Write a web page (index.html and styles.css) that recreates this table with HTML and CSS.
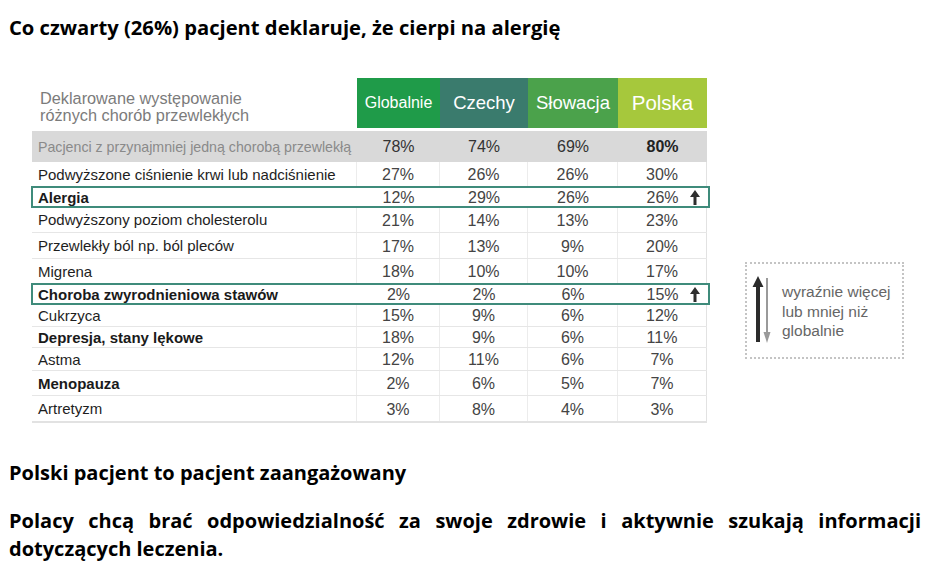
FILE: index.html
```html
<!DOCTYPE html>
<html lang="pl">
<head>
<meta charset="utf-8">
<title>Co czwarty pacjent</title>
<link rel="stylesheet" href="styles.css">
</head>
<body>
<div class="page">
  <h1 class="title">Co czwarty (26%) pacjent deklaruje, że cierpi na alergię</h1>

  <div class="figure">
    <div class="table">
      <div class="row head">
        <div class="cell label head-label">Deklarowane występowanie<br>różnych chorób przewlekłych</div>
        <div class="cell hc c-glob">Globalnie</div>
        <div class="cell hc c-cz">Czechy</div>
        <div class="cell hc c-sk">Słowacja</div>
        <div class="cell hc c-pl">Polska</div>
      </div>

      <div class="row total h31">
        <div class="cell label">Pacjenci z przynajmniej jedną chorobą przewlekłą</div>
        <div class="cell num">78%</div>
        <div class="cell num">74%</div>
        <div class="cell num">69%</div>
        <div class="cell num strong">80%</div>
      </div>

      <div class="row h25">
        <div class="cell label">Podwyższone ciśnienie krwi lub nadciśnienie</div>
        <div class="cell num">27%</div>
        <div class="cell num">26%</div>
        <div class="cell num">26%</div>
        <div class="cell num">30%</div>
      </div>

      <div class="row mark h20">
        <div class="cell label strong">Alergia</div>
        <div class="cell num">12%</div>
        <div class="cell num">29%</div>
        <div class="cell num">26%</div>
        <div class="cell num pl">26%<svg class="up" viewBox="0 0 10 15" width="10" height="15"><path d="M5 0 L10 7 L6.5 7 L6.5 15 L3.5 15 L3.5 7 L0 7 Z" fill="#2e2e2e"/></svg></div>
      </div>

      <div class="row h26">
        <div class="cell label">Podwyższony poziom cholesterolu</div>
        <div class="cell num">21%</div>
        <div class="cell num">14%</div>
        <div class="cell num">13%</div>
        <div class="cell num">23%</div>
      </div>

      <div class="row h26">
        <div class="cell label">Przewlekły ból np. ból pleców</div>
        <div class="cell num">17%</div>
        <div class="cell num">13%</div>
        <div class="cell num">9%</div>
        <div class="cell num">20%</div>
      </div>

      <div class="row h25">
        <div class="cell label">Migrena</div>
        <div class="cell num">18%</div>
        <div class="cell num">10%</div>
        <div class="cell num">10%</div>
        <div class="cell num">17%</div>
      </div>

      <div class="row mark h20">
        <div class="cell label strong">Choroba zwyrodnieniowa stawów</div>
        <div class="cell num">2%</div>
        <div class="cell num">2%</div>
        <div class="cell num">6%</div>
        <div class="cell num pl">15%<svg class="up" viewBox="0 0 10 15" width="10" height="15"><path d="M5 0 L10 7 L6.5 7 L6.5 15 L3.5 15 L3.5 7 L0 7 Z" fill="#2e2e2e"/></svg></div>
      </div>

      <div class="row h23">
        <div class="cell label">Cukrzyca</div>
        <div class="cell num">15%</div>
        <div class="cell num">9%</div>
        <div class="cell num">6%</div>
        <div class="cell num">12%</div>
      </div>

      <div class="row h21">
        <div class="cell label strong">Depresja, stany lękowe</div>
        <div class="cell num">18%</div>
        <div class="cell num">9%</div>
        <div class="cell num">6%</div>
        <div class="cell num">11%</div>
      </div>

      <div class="row h23">
        <div class="cell label">Astma</div>
        <div class="cell num">12%</div>
        <div class="cell num">11%</div>
        <div class="cell num">6%</div>
        <div class="cell num">7%</div>
      </div>

      <div class="row h25">
        <div class="cell label strong">Menopauza</div>
        <div class="cell num">2%</div>
        <div class="cell num">6%</div>
        <div class="cell num">5%</div>
        <div class="cell num">7%</div>
      </div>

      <div class="row h27 last">
        <div class="cell label">Artretyzm</div>
        <div class="cell num">3%</div>
        <div class="cell num">8%</div>
        <div class="cell num">4%</div>
        <div class="cell num">3%</div>
      </div>
    </div>

    <div class="legend">
      <svg class="legend-arrows" viewBox="0 0 24 70" width="24" height="70">
        <path d="M8 0 L13.5 11 L10 11 L10 66 L6 66 L6 11 L2.5 11 Z" fill="#2b2b2b"/>
        <path d="M17 2 L17 58" stroke="#9a9a9a" stroke-width="2"/>
        <path d="M13.5 56 L20.5 56 L17 67 Z" fill="#9a9a9a"/>
      </svg>
      <div class="legend-text">wyraźnie więcej<br>lub mniej niż<br>globalnie</div>
    </div>
  </div>

  <h2 class="subtitle">Polski pacjent to pacjent zaangażowany</h2>
  <p class="para">Polacy chcą brać odpowiedzialność za swoje zdrowie i aktywnie szukają informacji dotyczących leczenia.</p>
</div>
</body>
</html>
```

FILE: styles.css
```css
* { box-sizing: border-box; }

html, body {
  margin: 0;
  padding: 0;
  background: #ffffff;
}

.page {
  width: 930px;
  height: 575px;
  overflow: hidden;
  padding: 0 9px 0 9px;
  font-family: "Open Sans", Lato, sans-serif;
  color: #000;
}

.title {
  margin: 0;
  padding-top: 14px;
  font-size: 20.2px;
  line-height: 26px;
  font-weight: bold;
}

.subtitle {
  margin: 37px 0 0 0;
  font-size: 20px;
  line-height: 26px;
  font-weight: bold;
}

.para {
  margin: 21px 0 0 0;
  font-size: 20px;
  line-height: 28px;
  font-weight: bold;
  text-align: justify;
}

/* figure */
.figure {
  display: flex;
  align-items: flex-start;
  margin-top: 38px;
  margin-left: 23px;
  font-family: "Liberation Sans", Arial, sans-serif;
}

.table {
  width: 677px;
  display: flex;
  flex-direction: column;
}

.row {
  display: grid;
  grid-template-columns: 325px 83px 88px 90px 89px;
  width: 675px;
  border-bottom: 1px solid #e6e6e6;
  position: relative;
}

.row.head {
  height: 50px;
  margin-bottom: 3px;
  border-bottom: none;
}

.h31 { height: 31px; }
.h27 { height: 27px; }
.h26 { height: 26px; }
.h25 { height: 25px; }
.h23 { height: 23px; }
.h21 { height: 21px; }
.h20 { height: 20px; }

.row.last { border-bottom: 2px solid #e2e2e2; }

.cell {
  display: flex;
  align-items: center;
  border-right: 1px solid #ececec;
}

.cell:last-child { border-right: 1px solid #e2e2e2; }

.label {
  padding-left: 6px;
  font-size: 15px;
  color: #1e1e1e;
  white-space: nowrap;
}

.head .cell { border-right: none; }

.head-label {
  align-items: flex-end;
  padding-left: 8px;
  padding-bottom: 4px;
  font-size: 16.3px;
  line-height: 17px;
  color: #7b7b7b;
}

.hc {
  justify-content: center;
  color: #ffffff;
  font-size: 18.5px;
}

.c-glob { background: #1f9b49; font-size: 16px; }
.c-cz { background: #3a7b6d; }
.c-sk { background: #4ba24b; }
.c-pl { background: #a6c83c; font-size: 20.5px; }

.total {
  background: #d9d9d9;
  border-bottom: none;
}
.total .cell { border-right: none; }
.total .label { color: #8a8a8a; font-size: 14.2px; }

.num {
  justify-content: center;
  font-size: 16px;
  color: #444;
  padding-top: 2px;
}

.total .num { color: #333; padding-top: 0; }

.strong { font-weight: bold; color: #1a1a1a; }
.total .strong { color: #222; }

.mark {
  outline: 2px solid #3f8b7b;
  outline-offset: -1px;
  width: 677px;
  border-bottom: none;
  z-index: 1;
}
.mark .cell { border-right: none; }

.pl { position: relative; }

.up {
  position: absolute;
  right: 7px;
  top: 3px;
}

/* legend */
.legend {
  margin-top: 184px;
  margin-left: 36px;
  width: 159px;
  height: 97px;
  border: 2px dotted #c4c4c4;
  display: flex;
  align-items: flex-start;
  padding: 12px 0 0 3px;
}

.legend-arrows { flex: none; margin-right: 8px; }

.legend-text {
  font-size: 15.5px;
  line-height: 19.5px;
  color: #666;
  padding-top: 6px;
}
```
